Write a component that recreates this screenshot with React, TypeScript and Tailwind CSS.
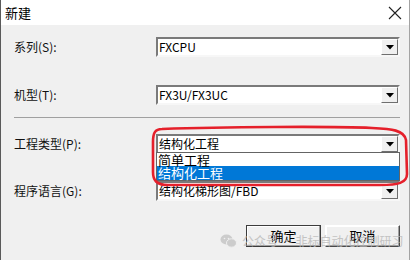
const font = "font-['Microsoft_YaHei','Noto_Sans_CJK_SC',sans-serif]";

function Combo({ value, className = "" }: { value: string; className?: string }) {
  return (
    <div
      className={`flex h-[20px] w-[244px] items-stretch border-2 border-t-[#7a7a7a] border-l-[#7a7a7a] border-b-[#f7f7f7] border-r-[#f7f7f7] bg-white ${className}`}
    >
      <span className="flex-1 overflow-hidden whitespace-nowrap pl-[1px] text-[12px] leading-[16px] text-black">{value}</span>
      <span className="flex w-[17px] items-center justify-center border border-t-white border-l-white border-b-[#6f6f6f] border-r-[#6f6f6f] bg-[#f0f0f0]">
        <svg width="8" height="5" viewBox="0 0 8 5">
          <path d="M0 0h8L4 4.5z" fill="#000" />
        </svg>
      </span>
    </div>
  );
}

function Row({ label, value, className = "" }: { label: string; value: string; className?: string }) {
  return (
    <div className={`flex items-center ${className}`}>
      <span className="w-[142px] text-[12px] leading-[16px] text-[#111]">{label}</span>
      <Combo value={value} />
    </div>
  );
}

function Button({ children, primary }: { children: string; primary?: boolean }) {
  return (
    <div
      className={`flex h-[22px] w-[75px] items-center justify-center border bg-[#f0f0f0] text-[13px] text-black ${
        primary ? "border-[#3c3c3c]" : "border-t-[#ffffff] border-l-[#ffffff] border-b-[#4a4a4a] border-r-[#4a4a4a]"
      } shadow-[inset_-1px_-1px_0_#a0a0a0,inset_1px_1px_0_#ffffff]`}
    >
      {children}
    </div>
  );
}

export default function App() {
  return (
    <div className={`relative h-[260px] w-[412px] overflow-hidden bg-white ${font}`}>
      <div className="flex h-full w-[410px] flex-col border-l border-r border-l-[#5a5a5a] border-r-[#a3a3a3]">
        <div className="flex h-[25px] items-center justify-between bg-white pl-[4px] pr-[6px]">
          <span className="text-[13px] text-black">新建</span>
          <svg width="14" height="14" viewBox="0 0 14 14" className="mr-[1px]">
            <path d="M1 1L13 13M13 1L1 13" stroke="#222" strokeWidth="1.1" />
          </svg>
        </div>
        <div className="flex flex-1 flex-col bg-[#f0f0f0] pl-[13px] pt-[12px]">
          <Row label="系列(S):" value="FXCPU" />
          <Row label="机型(T):" value="FX3U/FX3UC" className="mt-[28px]" />
          <div className="mt-[12px] h-px w-[386px] bg-[#a0a0a0]" />
          <Row label="工程类型(P):" value="结构化工程" className="mt-[16px]" />
          <Row label="程序语言(G):" value="结构化梯形图/FBD" className="mt-[27px]" />
          <div className="mt-[24px] flex gap-[4px] pl-[232px]">
            <Button primary>确定</Button>
            <Button>取消</Button>
          </div>
        </div>
      </div>

      {/* open dropdown list */}
      <div className="absolute left-[156px] top-[152px] w-[244px] border border-[#646464] bg-white text-[13px] leading-[13px]">
        <div className="h-[13px] pl-[1px] text-black">简单工程</div>
        <div className="h-[14px] bg-[#0078d7] pl-[1px] text-white">结构化工程</div>
      </div>

      {/* red annotation */}
      <svg className="absolute left-0 top-0" width="412" height="260" viewBox="0 0 412 260">
        <path
          d="M162 129 C220 127 330 126 372 128 C392 129 404 130 406 140 L407 174 C407 183 398 185 380 185 L168 185 C156 185 153 180 153 172 L153 142 C153 133 155 129 162 129 Z"
          fill="none"
          stroke="#e5202b"
          strokeWidth="2.6"
        />
      </svg>

      {/* watermark */}
      <div className="absolute left-[220px] top-[234px] flex items-center gap-[5px] whitespace-nowrap text-[12px] leading-[14px] text-[#b8b8b8] opacity-80">
        <svg width="17" height="14" viewBox="0 0 17 14">
          <ellipse cx="6.5" cy="5.5" rx="6" ry="5" fill="#c4c4c4" />
          <ellipse cx="11.5" cy="9" rx="5" ry="4.2" fill="#c4c4c4" stroke="#f0f0f0" strokeWidth="1" />
          <circle cx="4.5" cy="4.5" r="0.8" fill="#f0f0f0" />
          <circle cx="8.5" cy="4.5" r="0.8" fill="#f0f0f0" />
        </svg>
        <span>公众号 · 非标自动化控制研习</span>
      </div>
    </div>
  );
}
